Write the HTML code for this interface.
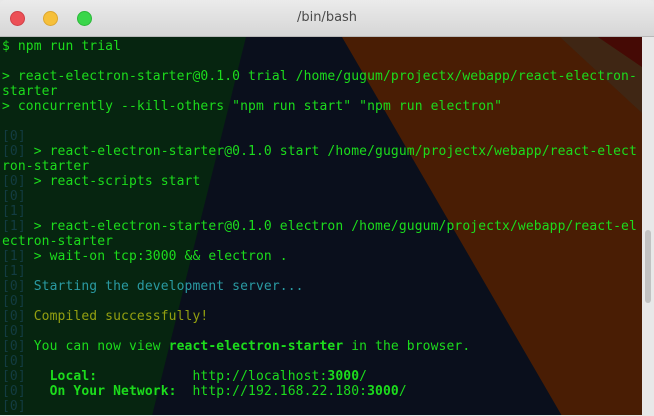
<!DOCTYPE html>
<html><head><meta charset="utf-8"><style>
*{margin:0;padding:0}
html,body{width:654px;height:416px;overflow:hidden;background:#e8e8e8}
.tb{position:absolute;left:0;top:0;width:654px;height:36px;background:linear-gradient(#ebebeb,#d6d6d6);border-radius:5px 5px 0 0;border-bottom:1px solid #b8b8b8}
.btn{position:absolute;top:11px;width:13px;height:13px;border-radius:50%}
.title{position:absolute;top:10px;left:0;width:654px;height:16px;line-height:16px;text-align:center;font:13px "DejaVu Sans","Liberation Sans",sans-serif;color:#4a4a4a}
.term{position:absolute;left:0;top:37px;width:642px;height:378px;overflow:hidden;background:#0a0f1c}
svg{position:absolute;left:0;top:0}
pre{position:relative;font:13px/15px "DejaVu Sans Mono","Liberation Mono",monospace;letter-spacing:0.11px;color:#1cdc1c;padding:2px 0 0 2px;white-space:pre}
.d{color:#133c42}.c{color:#2a9aa2}.y{color:#93a010}b{font-weight:bold}
.sb{position:absolute;left:642px;top:37px;width:12px;height:378px;background:#e8e8e8}
.th{position:absolute;left:645px;top:230px;width:6px;height:73px;background:#c2c2c2;border-radius:3px}
</style></head><body>
<div class="tb"></div>
<div class="btn" style="left:10px;background:#ec5056;border:1px solid #d04048"></div>
<div class="btn" style="left:43px;background:#f6c03a;border:1px solid #dca630"></div>
<div class="btn" style="left:77px;background:#3ad64a;border:1px solid #2cb83a"></div>
<div class="title">/bin/bash</div>
<div class="term">
<svg width="642" height="379" viewBox="0 37 642 379">
<polygon points="0,37 246,37 152,416 0,416" fill="#062510"/>
<polygon points="342,37 642,37 642,416 562,416" fill="#491d04"/>
<polygon points="560,37 598,37 642,67 642,113" fill="#3f2614"/>
<polygon points="598,37 642,37 642,67" fill="#450a05"/>
</svg>
<pre>$ npm run trial

&gt; react-electron-starter@0.1.0 trial /home/gugum/projectx/webapp/react-electron-
starter
&gt; concurrently --kill-others "npm run start" "npm run electron"

<span class="d">[0]</span>
<span class="d">[0]</span> &gt; react-electron-starter@0.1.0 start /home/gugum/projectx/webapp/react-elect
ron-starter
<span class="d">[0]</span> &gt; react-scripts start
<span class="d">[0]</span>
<span class="d">[1]</span>
<span class="d">[1]</span> &gt; react-electron-starter@0.1.0 electron /home/gugum/projectx/webapp/react-el
ectron-starter
<span class="d">[1]</span> &gt; wait-on tcp:3000 &amp;&amp; electron .
<span class="d">[1]</span>
<span class="d">[0]</span> <span class="c">Starting the development server...</span>
<span class="d">[0]</span>
<span class="d">[0]</span> <span class="y">Compiled successfully!</span>
<span class="d">[0]</span>
<span class="d">[0]</span> You can now view <b>react-electron-starter</b> in the browser.
<span class="d">[0]</span>
<span class="d">[0]</span>   <b>Local:</b>            http://localhost:<b>3000</b>/
<span class="d">[0]</span>   <b>On Your Network:</b>  http://192.168.22.180:<b>3000</b>/
<span class="d">[0]</span></pre>
</div>
<div class="sb"></div><div class="th"></div>
</body></html>
